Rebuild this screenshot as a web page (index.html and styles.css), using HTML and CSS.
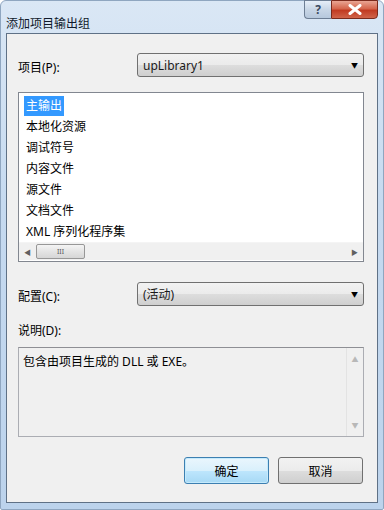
FILE: index.html
```html
<!DOCTYPE html>
<html lang="zh-CN">
<head>
    <meta charset="UTF-8">
    <title>添加项目输出组</title>
    <link rel="stylesheet" href="styles.css">
</head>
<body>
    <div class="window">
        <!-- Title bar -->
        <div class="titlebar">
            <span class="title">添加项目输出组</span>
            <div class="caption-buttons">
                <div class="cap-btn help">?</div>
                <div class="cap-btn close">
                    <svg width="14" height="11" viewBox="0 0 14 11">
                        <path d="M2 1.5 L12 9.5 M12 1.5 L2 9.5" stroke="#fff" stroke-width="3" stroke-linecap="round"/>
                    </svg>
                </div>
            </div>
        </div>

        <div class="client">
            <div class="row first-row">
                <label class="field-label">项目(P):</label>
                <div class="combo">
                    <span>upLibrary1</span>
                    <span class="arrow">&#9660;</span>
                </div>
            </div>

            <div class="listbox">
                <ul class="items">
                    <li><span class="selected">主输出</span></li>
                    <li>本地化资源</li>
                    <li>调试符号</li>
                    <li>内容文件</li>
                    <li>源文件</li>
                    <li>文档文件</li>
                    <li>XML 序列化程序集</li>
                </ul>
                <div class="hscroll">
                    <span class="sarrow">&#9664;</span>
                    <div class="track">
                        <div class="thumb">III</div>
                    </div>
                    <span class="sarrow">&#9654;</span>
                </div>
            </div>

            <div class="row config-row">
                <label class="field-label">配置(C):</label>
                <div class="combo">
                    <span>(活动)</span>
                    <span class="arrow">&#9660;</span>
                </div>
            </div>

            <div class="desc-label">说明(D):</div>
            <div class="desc">
                <div class="desc-text">包含由项目生成的 DLL 或 EXE。</div>
                <div class="vscroll">
                    <span class="varrow">&#9650;</span>
                    <span class="varrow">&#9660;</span>
                </div>
            </div>

            <div class="buttons">
                <button class="btn default">确定</button>
                <button class="btn">取消</button>
            </div>
        </div>
    </div>
</body>
</html>
```

FILE: styles.css
```css
/* General */
body {
    margin: 0;
    padding: 0;
    font-family: "Noto Sans", "Noto Sans CJK SC", sans-serif;
    font-size: 12px;
    color: #000;
    background: #fff;
}

.window {
    width: 384px;
    height: 510px;
    box-sizing: border-box;
    background: linear-gradient(to bottom, #dae7f5 0%, #c6daf0 40%, #bcd3ec 100%);
    border: 1px solid #8fa6c0;
    border-radius: 6px 6px 2px 2px;
    display: flex;
    flex-direction: column;
}

/* Title bar */
.titlebar {
    height: 32px;
    display: flex;
    justify-content: space-between;
    align-items: flex-start;
    padding: 0 5px 0 5px;
}

.title {
    margin-top: 13px;
    font-size: 12px;
    color: #10192a;
}

.caption-buttons {
    display: flex;
    margin-top: -1px;
}

.cap-btn {
    height: 19px;
    box-sizing: border-box;
    border: 1px solid #6d7e94;
    display: flex;
    align-items: center;
    justify-content: center;
}

.help {
    width: 27px;
    border-radius: 0 0 0 4px;
    border-right: none;
    background: linear-gradient(to bottom, #e6eef8, #c8d6e6 50%, #b6c8dc);
    color: #3a4a60;
    font-weight: bold;
    font-size: 12px;
}

.close {
    width: 47px;
    border-radius: 0 0 4px 0;
    border-color: #7a2a1c;
    background: linear-gradient(to bottom, #e9a593, #d5664c 45%, #c13b22 55%, #d0644a);
}

/* Client area */
.client {
    flex: 1;
    margin: 0 5px 6px 5px;
    border: 1px solid #5f7186;
    background: #f0f0f0;
    padding: 0 13px 0 11px;
    display: flex;
    flex-direction: column;
}

.row {
    display: flex;
    align-items: center;
    justify-content: space-between;
    height: 24px;
}

.first-row {
    margin-top: 19px;
}

.config-row {
    margin-top: 20px;
}

.field-label {
    padding-top: 4px;
}

.combo {
    width: 227px;
    height: 24px;
    box-sizing: border-box;
    border: 1px solid #707070;
    border-radius: 3px;
    background: linear-gradient(to bottom, #f2f2f2 0%, #ebebeb 50%, #dddddd 51%, #cfcfcf 100%);
    display: flex;
    align-items: center;
    justify-content: space-between;
    padding: 0 5px 0 5px;
    color: #1a1a1a;
}

.arrow {
    font-size: 7px;
    color: #000;
}

/* List box */
.listbox {
    margin-top: 15px;
    height: 170px;
    box-sizing: border-box;
    border: 1px solid #828790;
    background: #fff;
    display: flex;
    flex-direction: column;
}

.items {
    list-style: none;
    margin: 0;
    padding: 2px 0 0 5px;
    height: 148px;
    overflow: hidden;
}

.items li {
    height: 21px;
    line-height: 21px;
    padding-left: 2px;
}

.selected {
    background: #3399ff;
    color: #fff;
    display: inline-block;
    height: 20px;
    line-height: 20px;
    margin-left: -2px;
    padding: 0 2px;
}

.hscroll {
    height: 17px;
    background: #f0f0f0;
    display: flex;
    align-items: center;
    border-top: 1px solid #f4f4f4;
    margin-bottom: 1px;
}

.sarrow {
    width: 17px;
    text-align: center;
    font-size: 7px;
    color: #606060;
}

.track {
    flex: 1;
    height: 17px;
    display: flex;
    align-items: center;
}

.thumb {
    width: 49px;
    height: 15px;
    box-sizing: border-box;
    border: 1px solid #979797;
    border-radius: 2px;
    background: linear-gradient(to bottom, #f4f4f4, #e4e4e4 50%, #d6d6d6);
    font-size: 7px;
    color: #555;
    text-align: center;
    line-height: 13px;
}

/* Description */
.desc-label {
    margin-top: 16px;
    height: 18px;
    line-height: 18px;
}

.desc {
    margin-top: 7px;
    height: 90px;
    box-sizing: border-box;
    border: 1px solid #abadb3;
    border-top-color: #8e8f94;
    background: #f0f0f0;
    display: flex;
}

.desc-text {
    flex: 1;
    padding: 4px 0 0 4px;
}

.vscroll {
    width: 16px;
    border-left: 1px solid #e3e3e3;
    display: flex;
    flex-direction: column;
    justify-content: space-between;
    align-items: center;
    padding: 6px 0 6px 0;
}

.varrow {
    font-size: 7px;
    color: #b8b8b8;
}

/* Buttons */
.buttons {
    margin-top: 20px;
    display: flex;
    justify-content: flex-end;
    gap: 9px;
    margin-right: 1px;
}

.btn {
    width: 85px;
    height: 27px;
    border: 1px solid #707070;
    border-radius: 3px;
    background: linear-gradient(to bottom, #f2f2f2 0%, #ebebeb 50%, #dddddd 51%, #cfcfcf 100%);
    font-family: "Noto Sans", "Noto Sans CJK SC", sans-serif;
    font-size: 12px;
    color: #000;
    padding: 0;
}

.btn.default {
    border-color: #3c7fb1;
    background: linear-gradient(to bottom, #eaf6fd 0%, #d9f0fc 50%, #bee6fd 51%, #a7d9f5 100%);
    box-shadow: inset 0 0 0 1px #c5eafc;
}
```
